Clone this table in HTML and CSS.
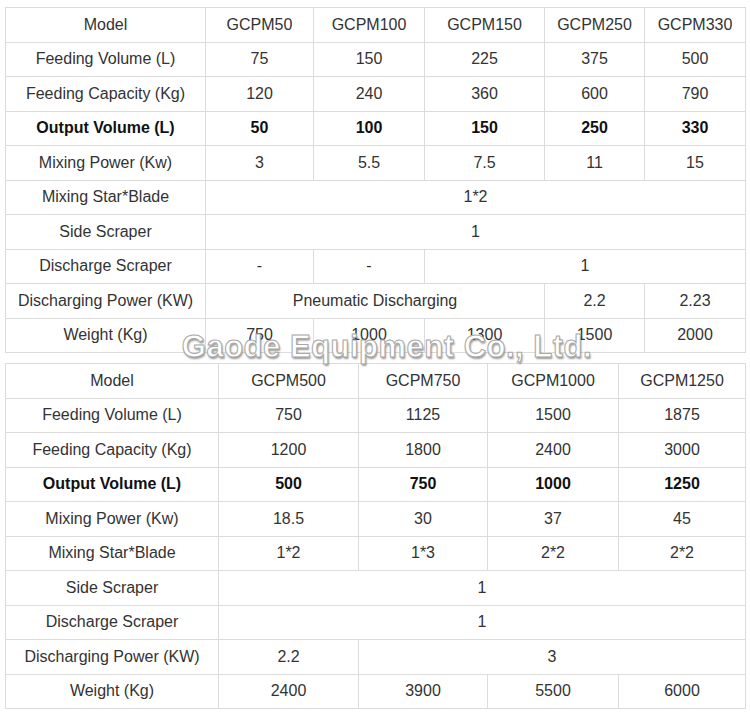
FILE: index.html
```html
<!DOCTYPE html>
<html>
<head>
<meta charset="utf-8">
<link rel="stylesheet" href="styles.css">
</head>
<body>
<div class="page">
  <table class="spec spec-a">
    <colgroup>
      <col class="c-label-a"><col class="c-a1"><col class="c-a2"><col class="c-a3"><col class="c-a4"><col class="c-a5">
    </colgroup>
    <tr><td>Model</td><td>GCPM50</td><td>GCPM100</td><td>GCPM150</td><td>GCPM250</td><td>GCPM330</td></tr>
    <tr><td>Feeding Volume (L)</td><td>75</td><td>150</td><td>225</td><td>375</td><td>500</td></tr>
    <tr><td>Feeding Capacity (Kg)</td><td>120</td><td>240</td><td>360</td><td>600</td><td>790</td></tr>
    <tr class="bold"><td>Output Volume (L)</td><td>50</td><td>100</td><td>150</td><td>250</td><td>330</td></tr>
    <tr><td>Mixing Power (Kw)</td><td>3</td><td>5.5</td><td>7.5</td><td>11</td><td>15</td></tr>
    <tr><td>Mixing Star*Blade</td><td colspan="5">1*2</td></tr>
    <tr><td>Side Scraper</td><td colspan="5">1</td></tr>
    <tr><td>Discharge Scraper</td><td>-</td><td>-</td><td colspan="3">1</td></tr>
    <tr><td>Discharging Power (KW)</td><td colspan="3">Pneumatic Discharging</td><td>2.2</td><td>2.23</td></tr>
    <tr><td>Weight (Kg)</td><td>750</td><td>1000</td><td>1300</td><td>1500</td><td>2000</td></tr>
  </table>
  <div class="watermark">Gaode Equipment Co., Ltd.</div>
  <table class="spec spec-b">
    <colgroup>
      <col class="c-label-b"><col class="c-b1"><col class="c-b2"><col class="c-b3"><col class="c-b4">
    </colgroup>
    <tr><td>Model</td><td>GCPM500</td><td>GCPM750</td><td>GCPM1000</td><td>GCPM1250</td></tr>
    <tr><td>Feeding Volume (L)</td><td>750</td><td>1125</td><td>1500</td><td>1875</td></tr>
    <tr><td>Feeding Capacity (Kg)</td><td>1200</td><td>1800</td><td>2400</td><td>3000</td></tr>
    <tr class="bold"><td>Output Volume (L)</td><td>500</td><td>750</td><td>1000</td><td>1250</td></tr>
    <tr><td>Mixing Power (Kw)</td><td>18.5</td><td>30</td><td>37</td><td>45</td></tr>
    <tr><td>Mixing Star*Blade</td><td>1*2</td><td>1*3</td><td>2*2</td><td>2*2</td></tr>
    <tr><td>Side Scraper</td><td colspan="4">1</td></tr>
    <tr><td>Discharge Scraper</td><td colspan="4">1</td></tr>
    <tr><td>Discharging Power (KW)</td><td>2.2</td><td colspan="3">3</td></tr>
    <tr><td>Weight (Kg)</td><td>2400</td><td>3900</td><td>5500</td><td>6000</td></tr>
  </table>
</div>
</body>
</html>
```
FILE: styles.css
```css
html, body {
  margin: 0;
  padding: 0;
  background: #ffffff;
}
.page {
  position: relative;
  padding: 7px 0 0 5px;
  font-family: "Liberation Sans", Arial, sans-serif;
  font-size: 16px;
  color: #333333;
}
.spec {
  border-collapse: collapse;
  table-layout: fixed;
  width: 740px;
}
.spec td {
  border: 1px solid #dcdcdc;
  text-align: center;
  vertical-align: middle;
  padding: 0;
  height: 33.5px;
  white-space: nowrap;
}
.spec-b {
  margin-top: 10px;
}
.bold td {
  font-weight: bold;
  color: #111111;
}
.c-label-a { width: 200px; }
.c-a1 { width: 108px; }
.c-a2 { width: 111px; }
.c-a3 { width: 120px; }
.c-a4 { width: 100px; }
.c-a5 { width: 101px; }
.c-label-b { width: 213px; }
.c-b1 { width: 140px; }
.c-b2 { width: 129px; }
.c-b3 { width: 131px; }
.c-b4 { width: 127px; }
.watermark {
  position: absolute;
  left: 180px;
  top: 329px;
  width: 414px;
  text-align: center;
  font-family: "Liberation Sans", Arial, sans-serif;
  font-size: 31px;
  font-weight: bold;
  color: #ffffff;
  -webkit-text-stroke: 1px #a8a8a8;
  text-shadow: 1px 2px 2px rgba(0,0,0,0.4);
  letter-spacing: 0.5px;
  white-space: nowrap;
  pointer-events: none;
  z-index: 2;
}
```
